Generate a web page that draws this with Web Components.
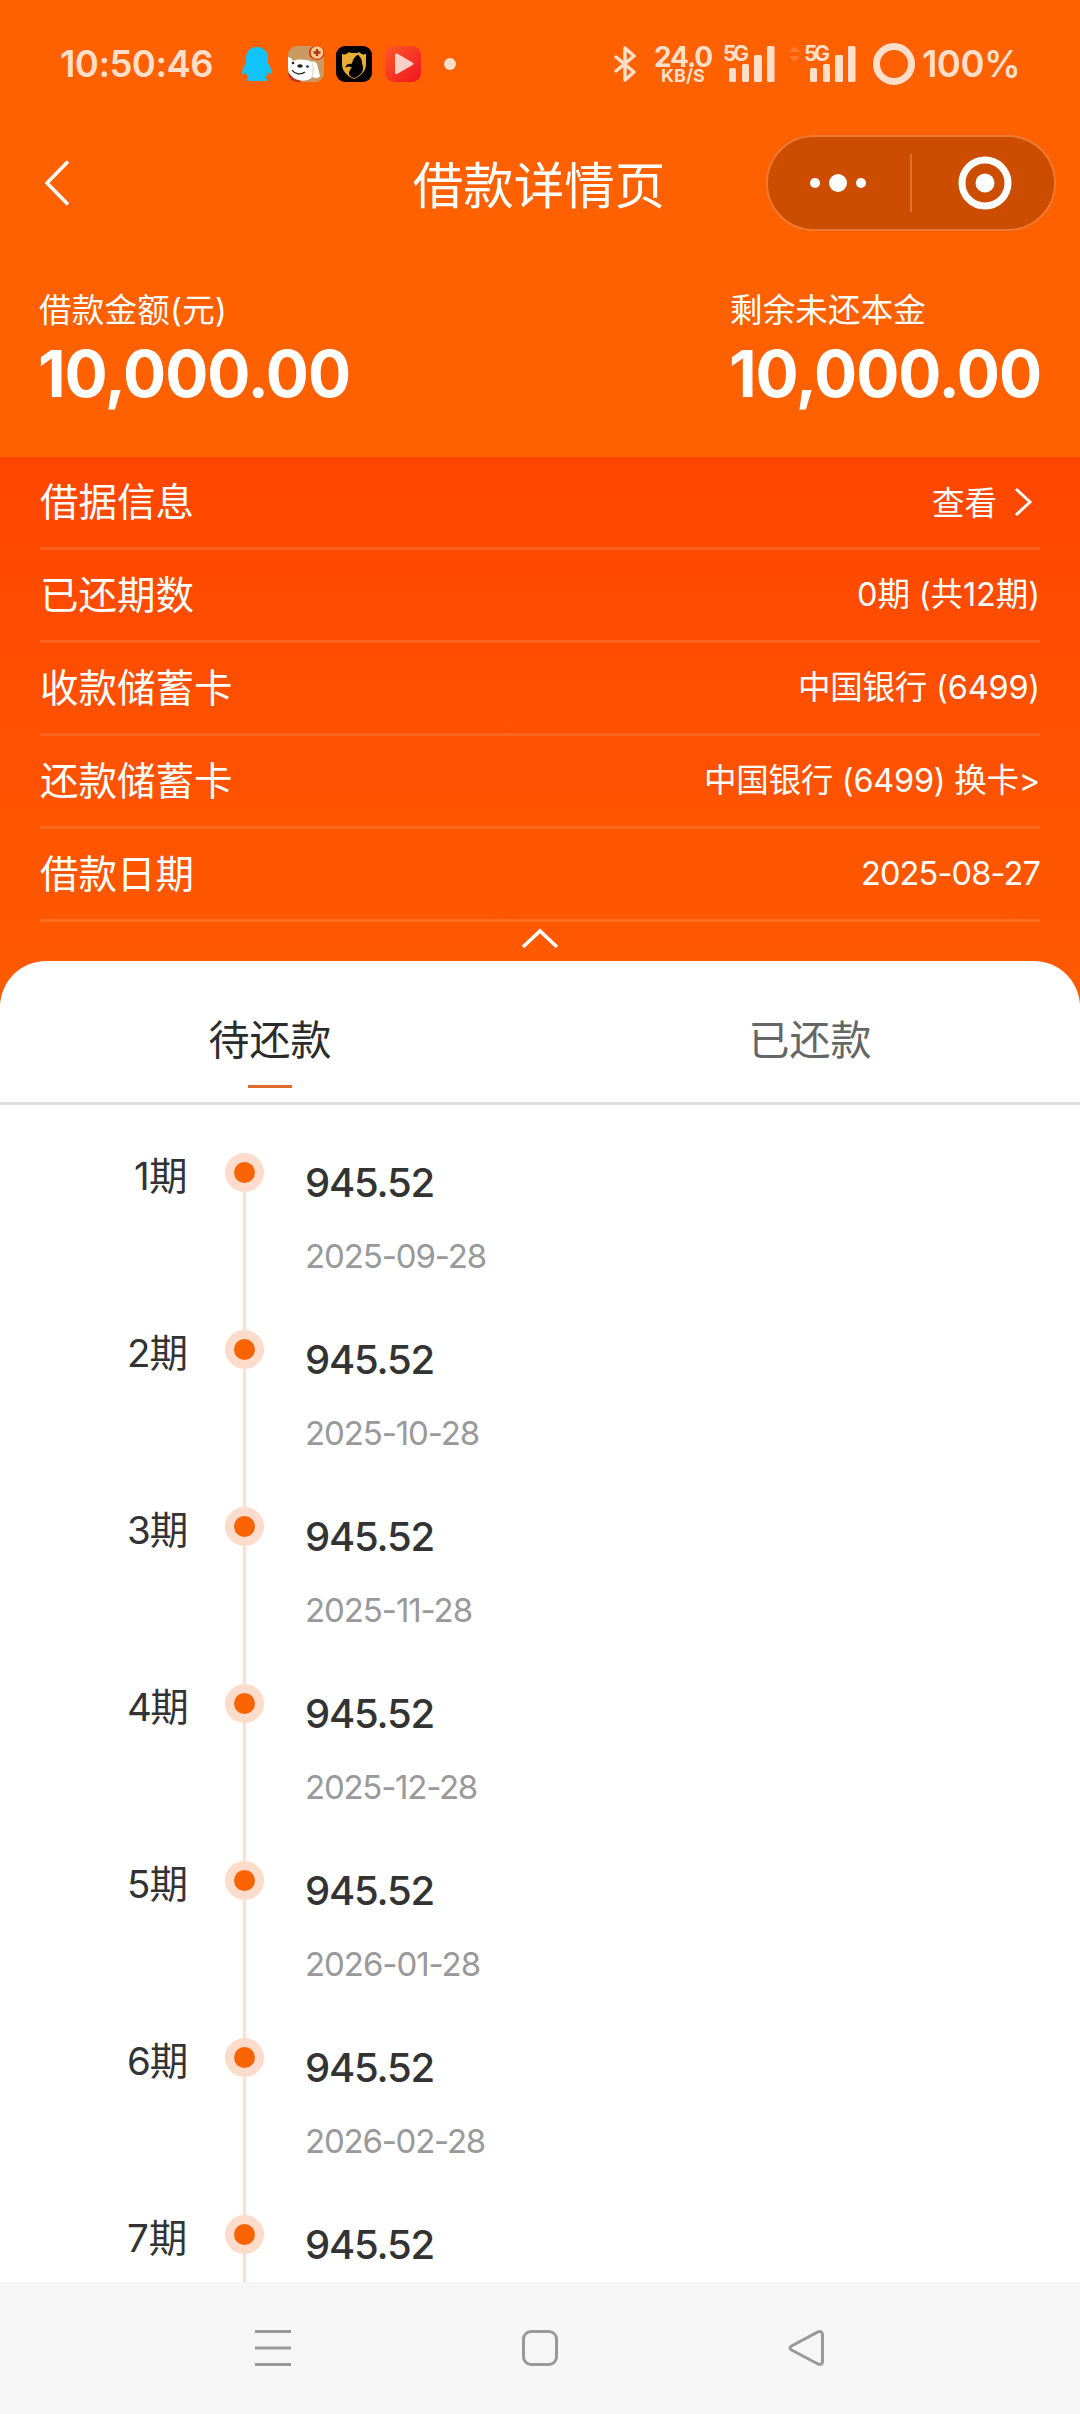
<!DOCTYPE html>
<html lang="zh-CN">
<head>
<meta charset="UTF-8">
<meta name="viewport" content="width=device-width">
<title>借款详情页</title>
<style>
  body {
    margin: 0;
    font-family: "Inter", "Noto Sans CJK SC", sans-serif;
  }
</style>
</head>
<body>
<loan-page></loan-page>

<script>
// Text line that spreads its letters over a given width
class FitText extends HTMLElement {
  constructor() {
    super();
    this.attachShadow({ mode: "open" });
  }

  static get styles() {
    return `
      :host {
        display: block;
        width: max-content;
        white-space: nowrap;
      }

      span {
        display: inline-block;
      }
    `;
  }

  connectedCallback() {
    this.shadowRoot.innerHTML = `<style>${FitText.styles}</style><span><slot></slot></span>`;
    const width = Number(this.getAttribute("width"));
    if (!width) { return; }
    const span = this.shadowRoot.querySelector("span");
    const natural = span.getBoundingClientRect().width;
    const letters = [...this.textContent].length;
    span.style.letterSpacing = `${(width - natural) / letters}px`;
  }
}

customElements.define("fit-text", FitText);

class SignalBars extends HTMLElement {
  constructor() {
    super();
    this.attachShadow({ mode: "open" });
  }

  static get styles() {
    return `
      :host {
        display: block;
        position: relative;
        width: 52px;
        height: 36px;
      }

      svg {
        display: block;
      }

      /* Network type sits over the short bars */
      fit-text {
        position: absolute;
        top: -3px;
        left: 0;
        font-size: 21px;
        font-weight: 700;
        line-height: 21px;
      }
    `;
  }

  connectedCallback() {
    this.shadowRoot.innerHTML = `
    <style>${SignalBars.styles}</style>
    <svg width="52" height="36" fill="currentColor">
      <rect x="6" y="22" width="7" height="14" rx="1.5"/>
      <rect x="19" y="18" width="7" height="18" rx="1.5"/>
      <rect x="31" y="9" width="8" height="27" rx="1.5"/>
      <rect x="44" y="0" width="7.500" height="36" rx="1.5"/>
    </svg>
    <fit-text width="23">5G</fit-text>
    `;
  }
}

customElements.define("signal-bars", SignalBars);

class StatusBar extends HTMLElement {
  constructor() {
    super();
    this.attachShadow({ mode: "open" });
  }

  static get styles() {
    return `
      :host {
        display: flex;
        align-items: center;
        box-sizing: border-box;
        height: 128px;
        padding: 0 60px 0 60px;
        color: #ffdfca;
      }

      svg {
        display: block;
        flex: none;
      }

      .clock, .battery {
        font-size: 36.500px;
        font-weight: 600;
        line-height: 44px;
      }

      .apps {
        display: flex;
        align-items: center;
        gap: 12.500px;
        margin-left: 28px;
      }

      .apps svg:first-child {
        margin-right: 2px;
      }

      .dot {
        width: 12px;
        height: 12px;
        margin-left: 23px;
        border-radius: 50%;
        background: currentColor;
      }

      .system {
        display: flex;
        align-items: center;
        margin-left: auto;
      }

      .speed {
        display: flex;
        flex-direction: column;
        align-items: center;
        width: 58px;
        margin: 0 11px 0 18px;
        font-weight: 700;
      }

      .speed .rate {
        margin-top: 1px;
        font-size: 28px;
        line-height: 22px;
      }

      .speed .unit {
        font-size: 18px;
        line-height: 16px;
      }

      .arrows {
        margin: -20px 4px 0 14px;
      }

      .ring {
        margin: 0 7px 0 17px;
      }
    `;
  }

  connectedCallback() {
    this.shadowRoot.innerHTML = `
    <style>${StatusBar.styles}</style>
    <fit-text class="clock" width="153">10:50:46</fit-text>
    <div class="apps">
      <svg width="32" height="36" viewBox="0 0 32 36">
        <path fill="#12c4fa" d="M16 1C9 1 5 6 5 12v5c-2 3-4 7-4 11 1 1 3-1 4-2 0 3 1 4 3 5-2 1-2 3-2 4h20c0-1 0-3-2-4 2-1 3-2 3-5 1 1 3 3 4 2 0-4-2-8-4-11v-5C27 6 23 1 16 1z"/>
      </svg>
      <svg width="36" height="36" viewBox="0 0 36 36">
        <defs><clipPath id="r"><rect width="36" height="36" rx="9"/></clipPath></defs>
        <g clip-path="url(#r)">
          <rect width="36" height="36" fill="#c99a62"/>
          <path fill="#c4311d" d="M0 27l14 9H0z"/>
          <path fill="#fff" d="M0 11c2 0 4 2 5 4 5-2 14-2 19 1 2-1 4 0 5 2l3 12c-2 3-5 2-8 1-3 4-8 4-13 3C4 33 0 27 0 21z"/>
          <path d="M24 17c2 4 1 10 0 14" fill="none" stroke="#d5d0ca" stroke-width="1"/>
          <ellipse cx="12" cy="20" rx="2.800" ry="1.800" fill="#222"/>
          <circle cx="5" cy="17" r="1.300" fill="#222"/>
          <circle cx="19.500" cy="20.500" r="1.300" fill="#222"/>
          <path d="M4 24c3 4.500 9 5 13 2" fill="none" stroke="#222" stroke-width="1.200"/>
        </g>
        <path fill="#d83a1c" d="M22 11C19 4 23-1 29 0c5 0 9 5 7 10-2 4-8 6-14 1z"/>
        <circle cx="29" cy="6.500" r="6.300" fill="#f7cd86"/>
        <path d="M29 3v7M25.500 6.500h7" stroke="#a8381a" stroke-width="2.400"/>
      </svg>
      <svg width="36" height="36" viewBox="0 0 36 36">
        <rect width="36" height="36" rx="9" fill="#000"/>
        <path fill="#e8ad35" d="M6 8c3 1 5 0 7-2l2 1h6l2-1c2 2 4 3 7 2v10c0 7-5 12-12 15C11 30 6 25 6 18z"/>
        <path fill="#000" d="M17 14l2-3 3-2.500 1.500 2c2 2 2.500 4 2.500 7 2 4 1 9-2 11-2 2-4 3-6 3.500-2-.5-4-2-5-3.500-.5-3 1-5 3-7l-3-1-4 1 2-3 5-1z"/>
      </svg>
      <svg width="36" height="36" viewBox="0 0 36 36">
        <defs><linearGradient id="g" x2="1" y2="1"><stop stop-color="#ff5a2a"/><stop offset="1" stop-color="#f0141e"/></linearGradient></defs>
        <rect width="36" height="36" rx="9" fill="url(#g)"/>
        <path fill="#ffd0c8" d="M10 9c0-1.500 1-2 2.500-1.200l15 8.700c1.200.7 1.200 1.800 0 2.500l-15 8.700C11 28.500 10 28 10 26.500z"/>
      </svg>
    </div>
    <div class="dot"></div>
    <div class="system">
      <svg width="22" height="36" viewBox="0 0 22 36" fill="none" stroke="currentColor" stroke-width="3.500" stroke-linejoin="round" stroke-linecap="round">
        <path d="M2 11l18 15-9 8V2l9 8L2 25"/>
      </svg>
      <div class="speed">
        <fit-text class="rate" width="58">24.0</fit-text>
        <fit-text class="unit" width="44">KB/S</fit-text>
      </div>
      <signal-bars></signal-bars>
      <svg class="arrows" width="11" height="16" fill="#ff7a2c">
        <path d="M5.500 0L11 6H0zM5.500 16L0 10h11z"/>
      </svg>
      <signal-bars></signal-bars>
      <svg class="ring" width="42" height="42" fill="none" stroke="currentColor">
        <circle cx="21" cy="21" r="17.500" stroke-width="7"/>
      </svg>
      <fit-text class="battery" width="98">100%</fit-text>
    </div>
    `;
  }
}

customElements.define("status-bar", StatusBar);

class TitleBar extends HTMLElement {
  constructor() {
    super();
    this.attachShadow({ mode: "open" });
  }

  static get styles() {
    return `
      :host {
        display: grid;
        grid-template-columns: 290px 1fr 290px;
        align-items: center;
        height: 110px;
        padding: 0 24px;
        color: #fff;
      }

      svg {
        display: block;
      }

      .back {
        margin-left: 19px;
      }

      .title {
        justify-self: center;
        margin: 5px 2px 0 0;
        font-size: 50.500px;
        line-height: 60px;
      }

      .capsule {
        display: flex;
        align-items: center;
        box-sizing: border-box;
        width: 290px;
        height: 96px;
        padding: 0 0 0 40px;
        border: 2px solid #ee7933;
        border-radius: 48px;
        background: #cc4d00;
      }

      .separator {
        width: 2px;
        height: 58px;
        margin: 0 46px 0 42px;
        background: #e07036;
      }
    `;
  }

  connectedCallback() {
    this.shadowRoot.innerHTML = `
    <style>${TitleBar.styles}</style>
    <svg class="back" width="28" height="48" fill="none" stroke="#fff" stroke-width="3.500">
      <path d="M25 2.500L4 24l21 21.500"/>
    </svg>
    <div class="title"><slot></slot></div>
    <div class="capsule">
      <svg width="60" height="20" fill="#fff">
        <circle cx="7" cy="10" r="5"/>
        <circle cx="30" cy="10" r="9"/>
        <circle cx="53" cy="10" r="5"/>
      </svg>
      <div class="separator"></div>
      <svg width="54" height="54">
        <circle cx="27" cy="27" r="23" fill="none" stroke="#fff" stroke-width="7"/>
        <circle cx="27" cy="27" r="9.500" fill="#fff"/>
      </svg>
    </div>
    `;
  }
}

customElements.define("title-bar", TitleBar);

class LoanAmount extends HTMLElement {
  constructor() {
    super();
    this.attachShadow({ mode: "open" });
  }

  static get styles() {
    return `
      :host {
        display: block;
        color: #fff;
      }

      .label {
        font-size: 32.500px;
        line-height: 44px;
      }

      .amount {
        margin: 6px 0 0 -1px;
        font-size: 64px;
        font-weight: 700;
        line-height: 70px;
      }
    `;
  }

  connectedCallback() {
    this.shadowRoot.innerHTML = `
    <style>${LoanAmount.styles}</style>
    <fit-text class="label" width="${this.getAttribute("label-width")}">${this.getAttribute("label")}</fit-text>
    <fit-text class="amount" width="312">${this.getAttribute("amount")}</fit-text>
    `;
  }
}

customElements.define("loan-amount", LoanAmount);

class DetailRow extends HTMLElement {
  constructor() {
    super();
    this.attachShadow({ mode: "open" });
  }

  static get styles() {
    return `
      :host {
        display: flex;
        align-items: center;
        justify-content: space-between;
        height: 90px;
        border-bottom: 3px solid rgba(255, 255, 255, 0.12);
        color: #fff;
      }

      .label {
        font-size: 38.500px;
        line-height: 60px;
      }

      .value {
        display: flex;
        align-items: center;
        font-size: 32.500px;
        line-height: 60px;
      }
    `;
  }

  connectedCallback() {
    this.shadowRoot.innerHTML = `
    <style>${DetailRow.styles}</style>
    <div class="label">${this.getAttribute("label")}</div>
    <div class="value"><slot></slot></div>
    `;
  }
}

customElements.define("detail-row", DetailRow);

class LoanTabs extends HTMLElement {
  constructor() {
    super();
    this.attachShadow({ mode: "open" });
  }

  static get styles() {
    return `
      :host {
        display: grid;
        grid-template-columns: 1fr 1fr;
        height: 141px;
        border-bottom: 3px solid #dedede;
      }

      button {
        display: flex;
        flex-direction: column;
        align-items: center;
        padding: 49px 0 0;
        border: 0;
        background: none;
        color: #666;
        font: inherit;
        font-size: 41px;
        line-height: 60px;
      }

      .active {
        color: #2b2b2b;
      }

      .active::after {
        content: "";
        width: 44px;
        height: 3px;
        margin-top: 15px;
        background: #dd6b2b;
      }
    `;
  }

  connectedCallback() {
    this.shadowRoot.innerHTML = `
    <style>${LoanTabs.styles}</style>
    <button class="active">待还款</button>
    <button>已还款</button>
    `;
    const buttons = this.shadowRoot.querySelectorAll("button");
    buttons.forEach(button => button.addEventListener("click", () => {
      buttons.forEach(other => other.classList.toggle("active", other === button));
    }));
  }
}

customElements.define("loan-tabs", LoanTabs);

class RepayItem extends HTMLElement {
  constructor() {
    super();
    this.attachShadow({ mode: "open" });
  }

  static get styles() {
    return `
      :host {
        display: grid;
        grid-template-columns: 187px 39px 1fr;
        height: 177px;
        flex: none;
      }

      .period {
        justify-self: end;
        margin-top: 1px;
        color: #333;
        font-size: 38.500px;
        line-height: 44px;
      }

      .track {
        display: flex;
        flex-direction: column;
        align-items: center;
        margin-left: 38px;
        width: 39px;
      }

      .dot {
        width: 21px;
        height: 21px;
        border: 9px solid #fddccb;
        border-radius: 50%;
        background: #f96400;
      }

      .line {
        flex: 1;
        width: 3px;
        background: #fde0d3;
      }

      .info {
        padding: 5px 0 0 79px;
      }

      .amount {
        color: #333;
        font-size: 40px;
        font-weight: 500;
        line-height: 50px;
      }

      .date {
        margin-top: 28px;
        color: #999;
        font-size: 33px;
        line-height: 40px;
      }
    `;
  }

  connectedCallback() {
    const period = this.getAttribute("period");
    const date = this.getAttribute("date");
    this.shadowRoot.innerHTML = `
    <style>${RepayItem.styles}</style>
    <fit-text class="period" width="${period === "1" ? 53 : 60}">${period}期</fit-text>
    <div class="track">
      <div class="dot"></div>
      <div class="line"></div>
    </div>
    <div class="info">
      <fit-text class="amount" width="129">945.52</fit-text>
      ${date ? `<fit-text class="date" width="${this.getAttribute("width")}">${date}</fit-text>` : ""}
    </div>
    `;
  }
}

customElements.define("repay-item", RepayItem);

class NavBar extends HTMLElement {
  constructor() {
    super();
    this.attachShadow({ mode: "open" });
  }

  static get styles() {
    return `
      :host {
        display: flex;
        align-items: center;
        justify-content: center;
        gap: 229px;
        flex: none;
        height: 132px;
        background: #f6f6f6;
      }
    `;
  }

  connectedCallback() {
    this.shadowRoot.innerHTML = `
    <style>${NavBar.styles}</style>
    <svg width="38" height="38" fill="none" stroke="#999" stroke-width="3">
      <path d="M1 2.500h36M1 19h36M1 35.500h36"/>
    </svg>
    <svg width="38" height="38" fill="none" stroke="#999" stroke-width="3">
      <rect x="2.500" y="2.500" width="33" height="33" rx="7.500"/>
    </svg>
    <svg width="38" height="38" fill="none" stroke="#999" stroke-width="3" stroke-linejoin="round">
      <path d="M3.500 17L30 2.900Q34.500 1.500 34.500 6v26Q34.500 36.500 30 35L3.500 21Q0.500 19 3.500 17z"/>
    </svg>
    `;
  }
}

customElements.define("nav-bar", NavBar);

const plan = [
  ["2025-09-28", 181],
  ["2025-10-28", 174],
  ["2025-11-28", 167],
  ["2025-12-28", 172],
  ["2026-01-28", 175],
  ["2026-02-28", 180],
  ["", 0],
];

class LoanPage extends HTMLElement {
  constructor() {
    super();
    this.attachShadow({ mode: "open" });
  }

  static get styles() {
    return `
      :host {
        display: flex;
        flex-direction: column;
        width: 1080px;
        height: 2414px;
        overflow: hidden;
        background: #fff;
      }

      header {
        flex: none;
        height: 457px;
        background: #ff6000;
      }

      .amounts {
        display: flex;
        justify-content: space-between;
        padding: 51px 39px 0;
      }

      .details {
        flex: none;
        box-sizing: border-box;
        height: 552px;
        padding: 0 40px;
        background: linear-gradient(#ff4600, #ff5b00);
      }

      .view {
        margin-top: 4px;
      }

      .chevron {
        margin-left: 17px;
        margin-right: 7px;
      }

      .collapse {
        display: block;
        margin: 3px auto 0;
      }

      .sheet {
        flex: 1;
        display: flex;
        flex-direction: column;
        min-height: 0;
        margin-top: -48px;
        border-radius: 46px 46px 0 0;
        background: #fff;
      }

      .timeline {
        flex: 1;
        display: flex;
        flex-direction: column;
        min-height: 0;
        padding-top: 48px;
        overflow: hidden;
      }
    `;
  }

  connectedCallback() {
    this.shadowRoot.innerHTML = `
    <style>${LoanPage.styles}</style>
    <header>
      <status-bar></status-bar>
      <title-bar>借款详情页</title-bar>
      <div class="amounts">
        <loan-amount label="借款金额(元)" label-width="188" amount="10,000.00"></loan-amount>
        <loan-amount label="剩余未还本金" label-width="196" amount="10,000.00"></loan-amount>
      </div>
    </header>
    <section class="details">
      <detail-row label="借据信息"><span class="view">查看</span>
        <svg class="chevron" width="19" height="32" fill="none" stroke="#fff" stroke-width="3">
          <path d="M2 3l14 13L2 29"/>
        </svg>
      </detail-row>
      <detail-row label="已还期数"><fit-text width="183">0期 (共12期)</fit-text></detail-row>
      <detail-row label="收款储蓄卡"><fit-text width="242">中国银行 (6499)</fit-text></detail-row>
      <detail-row label="还款储蓄卡"><fit-text width="336">中国银行 (6499) 换卡&gt;</fit-text></detail-row>
      <detail-row label="借款日期"><fit-text width="179">2025-08-27</fit-text></detail-row>
      <svg class="collapse" width="40" height="26" fill="none" stroke="#fff" stroke-width="3.500">
        <path d="M3 22L20 6l17 16"/>
      </svg>
    </section>
    <main class="sheet">
      <loan-tabs></loan-tabs>
      <div class="timeline">
        ${plan.map(([date, width], i) => `<repay-item period="${i + 1}" date="${date}" width="${width}"></repay-item>`).join("")}
      </div>
    </main>
    <nav-bar></nav-bar>
    `;
  }
}

customElements.define("loan-page", LoanPage);
</script>
</body>
</html>
